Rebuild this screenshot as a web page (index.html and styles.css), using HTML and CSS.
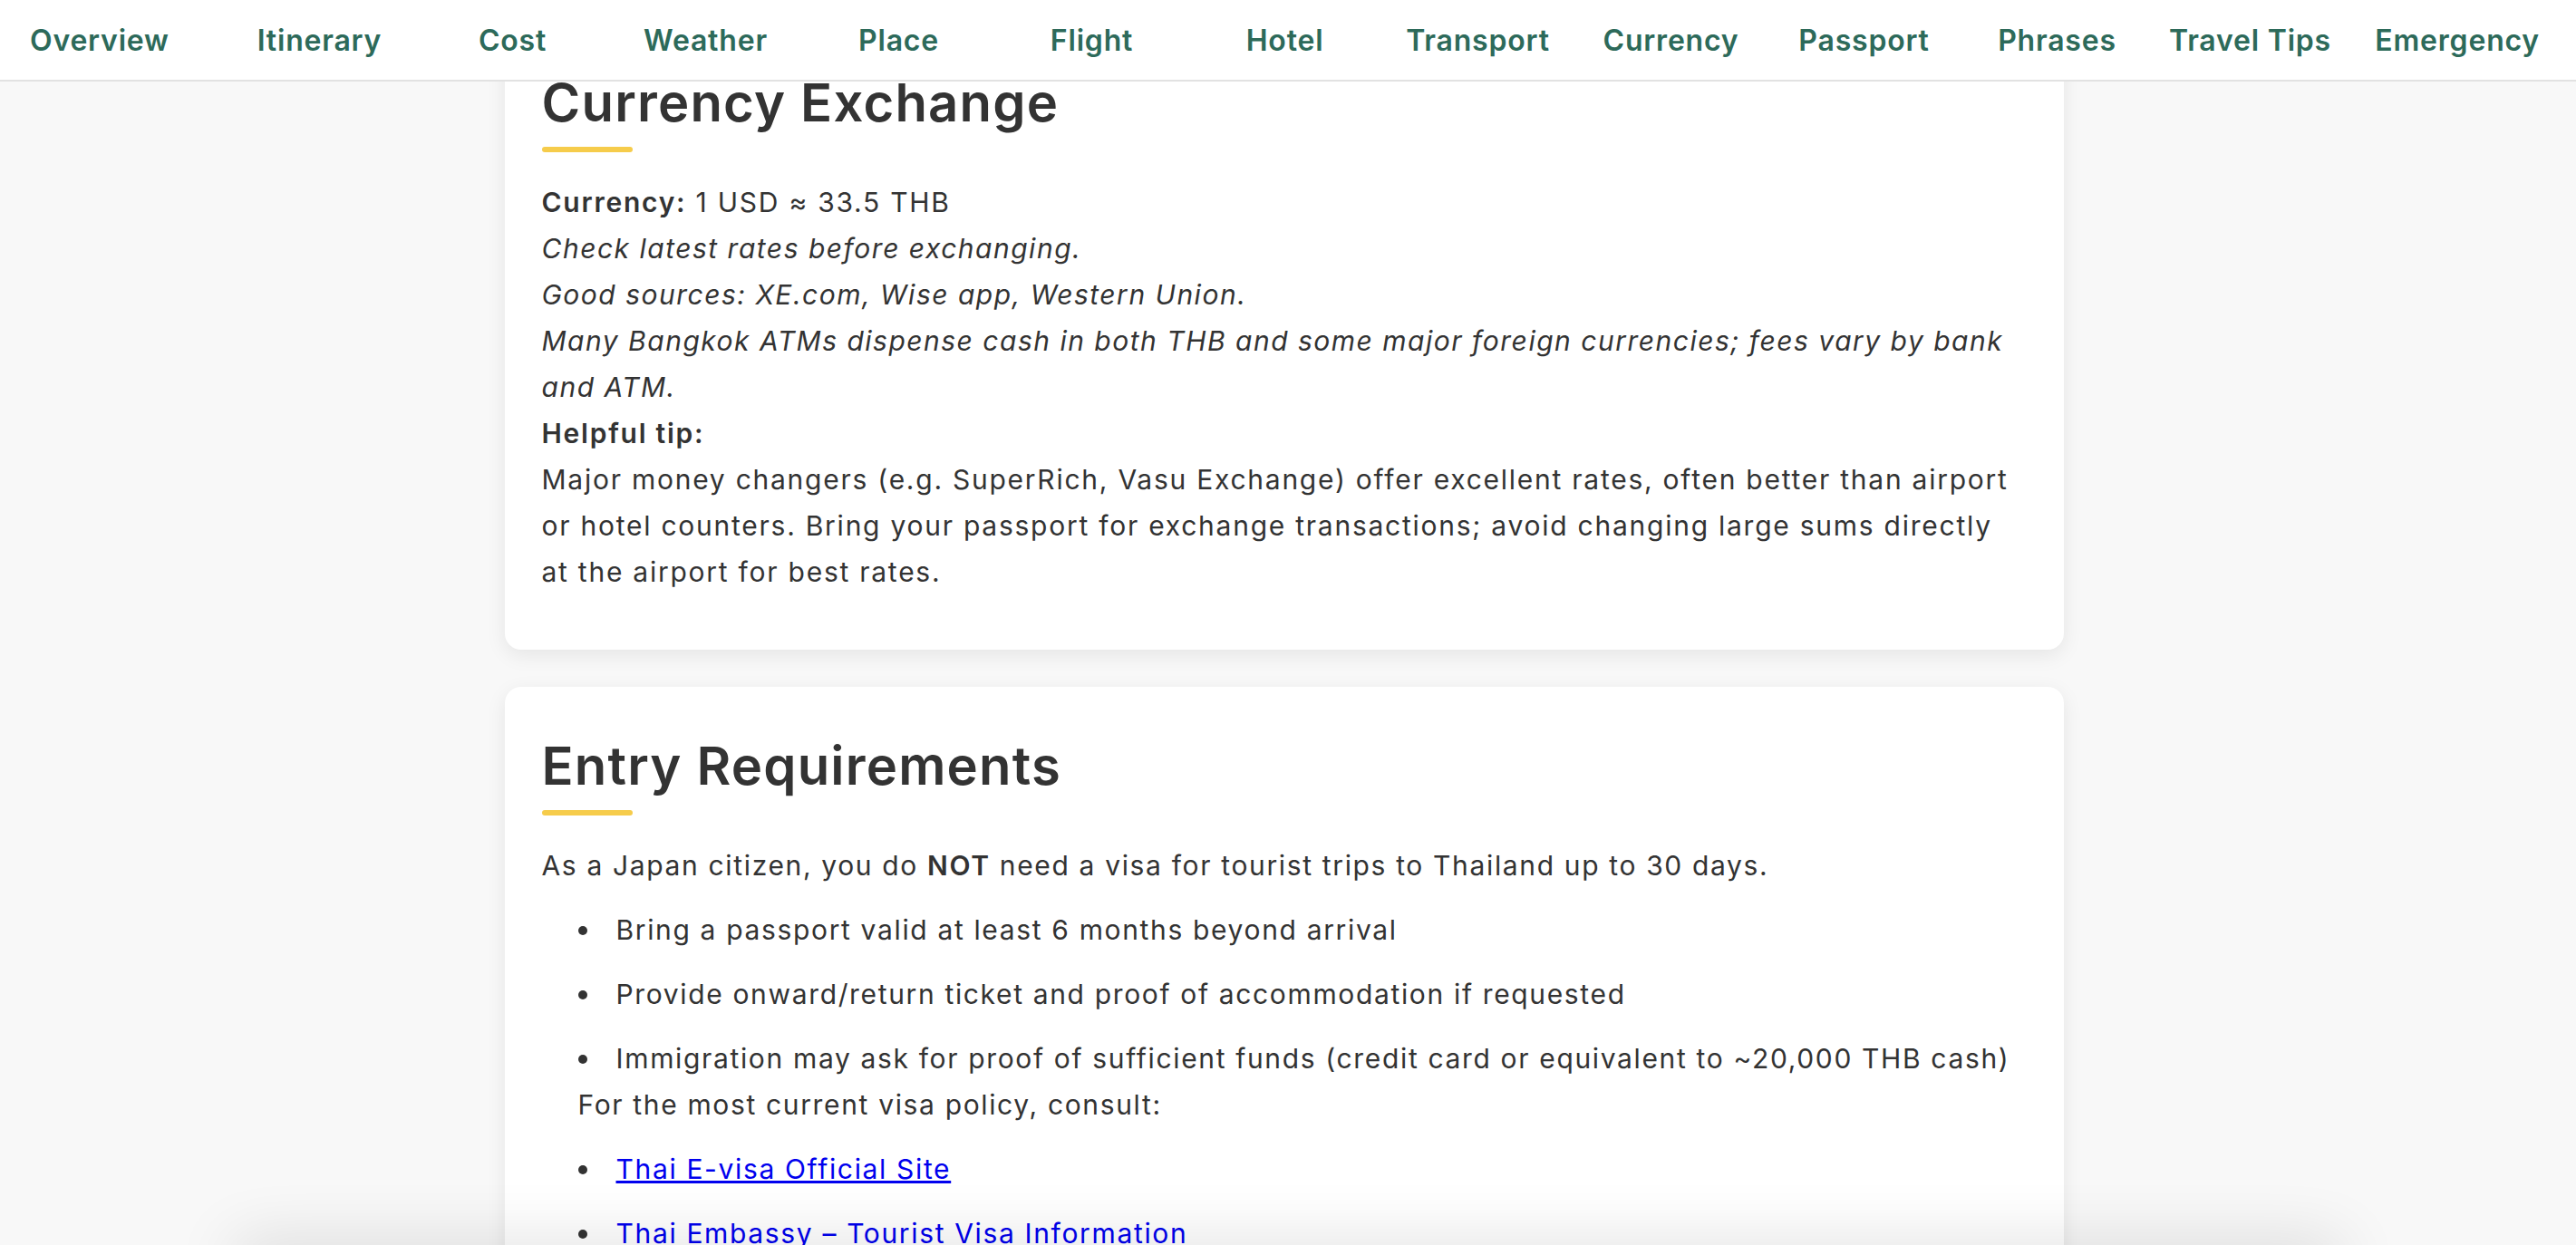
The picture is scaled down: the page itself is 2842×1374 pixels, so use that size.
FILE: index.html
```html
<!DOCTYPE html>
<html lang="en">
<head>
<meta charset="utf-8">
<title>Thailand Trip</title>
<link rel="stylesheet" href="styles.css">
</head>
<body>
<nav class="topnav">
  <a class="nav-link first" href="#overview">Overview</a>
  <a class="nav-link" href="#itinerary">Itinerary</a>
  <a class="nav-link" href="#cost">Cost</a>
  <a class="nav-link" href="#weather">Weather</a>
  <a class="nav-link" href="#place">Place</a>
  <a class="nav-link" href="#flight">Flight</a>
  <a class="nav-link" href="#hotel">Hotel</a>
  <a class="nav-link" href="#transport">Transport</a>
  <a class="nav-link" href="#currency">Currency</a>
  <a class="nav-link" href="#passport">Passport</a>
  <a class="nav-link" href="#phrases">Phrases</a>
  <a class="nav-link" href="#tips">Travel Tips</a>
  <a class="nav-link last" href="#emergency">Emergency</a>
</nav>

<main class="page">
  <div class="container">
    <section class="card" id="currency">
      <h2 class="card-title">Currency Exchange</h2>
      <div class="title-bar"></div>
      <p class="body-text tip-text">
        <strong>Currency:</strong> 1 USD ≈ 33.5 THB<br>
        <em>Check latest rates before exchanging.</em><br>
        <em>Good sources: XE.com, Wise app, Western Union.</em><br>
        <em>Many Bangkok ATMs dispense cash in both THB and some major foreign currencies; fees vary by bank and ATM.</em><br>
        <strong>Helpful tip:</strong><br>
        Major money changers (e.g. SuperRich, Vasu Exchange) offer excellent rates, often better than airport or hotel counters. Bring your passport for exchange transactions; avoid changing large sums directly at the airport for best rates.
      </p>
    </section>

    <section class="card" id="passport">
      <h2 class="card-title">Entry Requirements</h2>
      <div class="title-bar"></div>
      <p class="body-text">As a Japan citizen, you do <strong>NOT</strong> need a visa for tourist trips to Thailand up to 30 days.</p>
      <div class="visa-block">
        <ul class="dot-list">
          <li>Bring a passport valid at least 6 months beyond arrival</li>
          <li>Provide onward/return ticket and proof of accommodation if requested</li>
          <li>Immigration may ask for proof of sufficient funds (credit card or equivalent to ~20,000 THB cash)</li>
        </ul>
        <div class="consult">For the most current visa policy, consult:</div>
        <ul class="dot-list">
          <li><a href="#evisa">Thai E-visa Official Site</a></li>
          <li><a href="#embassy">Thai Embassy – Tourist Visa Information</a></li>
        </ul>
      </div>
    </section>
  </div>
</main>
<div class="bottom-float"></div>
</body>
</html>
```

FILE: styles.css
```css
* { box-sizing: border-box; }

html, body {
  margin: 0;
  padding: 0;
  background: #f8f8f8;
  color: #333333;
  font-family: "Inter", "Noto Sans", sans-serif;
}

.topnav {
  position: fixed;
  top: 0;
  left: 0;
  right: 0;
  height: 90px;
  z-index: 10;
  background: #ffffff;
  border-bottom: 2px solid #e2e2e2;
  display: flex;
  align-items: center;
  padding: 2px 40px 0 33px;
}

.nav-link {
  flex: 1 1 0;
  text-align: center;
  white-space: nowrap;
  color: #2d6a5a;
  text-decoration: none;
  font-weight: 600;
  font-size: 32px;
  line-height: 40px;
  letter-spacing: 0.8px;
}

.nav-link.first { text-align: left; }
.nav-link.last { text-align: right; }

.page {
  padding: 26px 9px 40px 0;
}

.container {
  width: 1720px;
  margin: 0 auto;
  display: flex;
  flex-direction: column;
  gap: 41px;
}

.card {
  background: #ffffff;
  border-radius: 18px;
  box-shadow: 0 6px 22px rgba(0, 0, 0, 0.08);
  padding: 40px 41px;
}

.card-title {
  margin: 12px 0 0;
  font-size: 58px;
  line-height: 70px;
  font-weight: 600;
  letter-spacing: 1.2px;
  color: #333333;
}

.title-bar {
  width: 100px;
  height: 6px;
  border-radius: 3px;
  background: #f6cc4b;
  margin-top: 14px;
  margin-bottom: 30px;
}

.body-text {
  margin: 0 0 20px;
  font-size: 30px;
  line-height: 51px;
  letter-spacing: 1.65px;
}

.tip-text {
  letter-spacing: 1.75px;
  padding-right: 10px;
}

.tip-text em { letter-spacing: 1.5px; }

.body-text strong { font-weight: 600; }

.visa-block {
  padding-left: 40px;
  font-size: 30px;
  line-height: 51px;
  letter-spacing: 1.65px;
}

.dot-list {
  list-style: none;
  margin: 0;
  padding: 0;
}

.dot-list li {
  display: flex;
  align-items: center;
  margin-top: 20px;
}

.dot-list li::before {
  content: "";
  flex: 0 0 auto;
  width: 10px;
  height: 10px;
  border-radius: 50%;
  background: #333333;
  margin-right: 32px;
}

.dot-list a {
  color: #0000ee;
  text-decoration: underline;
}

.consult {
  margin: 0;
}

.bottom-float {
  position: fixed;
  left: 260px;
  right: 260px;
  bottom: -40px;
  height: 40px;
  background: #ffffff;
  box-shadow: 0 0 70px rgba(0, 0, 0, 0.16);
  z-index: 5;
}
```
